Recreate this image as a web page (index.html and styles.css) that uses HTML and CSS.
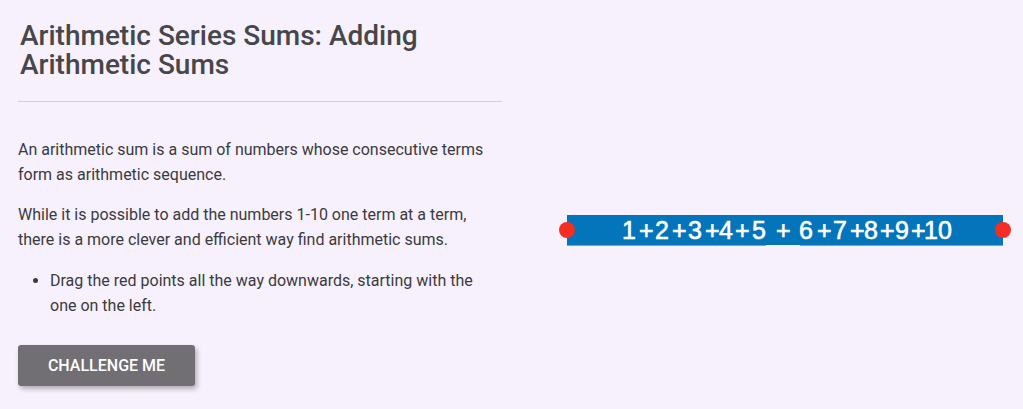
FILE: index.html
```html
<!DOCTYPE html>
<html>
<head>
<meta charset="utf-8">
<link rel="stylesheet" href="styles.css">
</head>
<body>
<div class="page">
  <div class="left">
    <h1 class="title">Arithmetic Series Sums: Adding Arithmetic Sums</h1>
    <div class="rule"></div>
    <p class="para">An arithmetic sum is a sum of numbers whose consecutive terms form as arithmetic sequence.</p>
    <p class="para">While it is possible to add the numbers 1-10 one term at a term, there is a more clever and efficient way find arithmetic sums.</p>
    <ul class="list">
      <li>Drag the red points all the way downwards, starting with the one on the left.</li>
    </ul>
    <button class="btn">CHALLENGE ME</button>
  </div>
  <div class="right">
    <svg class="applet" width="518" height="409" viewBox="505 0 518 409">
      <rect x="567" y="215" width="436" height="31" fill="#0474bb"/>
      <rect x="567" y="245" width="436" height="1" fill="#6aa8dc"/>
      <rect x="766" y="245" width="34" height="1" fill="#f6f1fd"/>
      <g class="nums" fill="#ffffff">
        <text x="622" y="239">1</text>
        <text x="639" y="239">+</text>
        <text x="655" y="239">2</text>
        <text x="672" y="239">+</text>
        <text x="688" y="239">3</text>
        <text x="705" y="239">+</text>
        <text x="719" y="239">4</text>
        <text x="735" y="239">+</text>
        <text x="752" y="239">5</text>
        <text x="776" y="239">+</text>
        <text x="799" y="239">6</text>
        <text x="817" y="239">+</text>
        <text x="833" y="239">7</text>
        <text x="850" y="239">+</text>
        <text x="864" y="239">8</text>
        <text x="880" y="239">+</text>
        <text x="895" y="239">9</text>
        <text x="911" y="239">+</text>
        <text x="924" y="239">10</text>
      </g>
      <circle cx="567" cy="230" r="8" fill="#f42e22"/>
      <circle cx="1003" cy="230" r="8" fill="#f42e22"/>
    </svg>
  </div>
</div>
</body>
</html>
```

FILE: styles.css
```css
html, body {
  margin: 0;
  padding: 0;
  background: #f6f1fd;
}
body {
  width: 1023px;
  height: 409px;
  overflow: hidden;
  font-family: Roboto, "Liberation Sans", sans-serif;
}
.page {
  display: flex;
  width: 1023px;
  height: 409px;
}
.left {
  width: 484px;
  padding-left: 18px;
  padding-right: 3px;
  flex: none;
}
.title {
  margin: 21px 0 0 2px;
  font-size: 28px;
  font-weight: 500;
  line-height: 29px;
  color: #474649;
  padding-right: 60px;
}
.rule {
  margin-top: 22px;
  height: 1px;
  background: #d3cfd9;
}
.para {
  margin: 35px 0 0 0;
  font-size: 16px;
  line-height: 25px;
  color: #3b3a3d;
}
.para + .para {
  margin-top: 15px;
}
.list {
  margin: 16px 0 0 0;
  padding-left: 32px;
  font-size: 16px;
  line-height: 25px;
  color: #3b3a3d;
}
.btn {
  margin-top: 27px;
  width: 177px;
  height: 41px;
  border: none;
  border-radius: 3px;
  background: #716e74;
  color: #ffffff;
  font-family: Roboto, "Liberation Sans", sans-serif;
  font-size: 16px;
  font-weight: 500;
  letter-spacing: 0;
  box-shadow: 2px 3px 5px rgba(0, 0, 0, 0.28);
  padding: 0;
}
.right {
  flex: 1;
  position: relative;
}
.applet {
  display: block;
}
.nums text {
  font-family: "Liberation Sans", Arial, sans-serif;
  font-size: 25px;
  stroke: #ffffff;
  stroke-width: 0.6px;
}
```
